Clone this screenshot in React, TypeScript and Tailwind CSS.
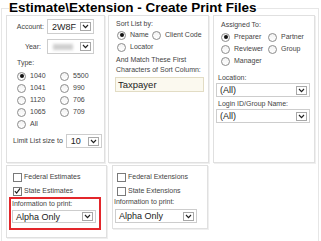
import React from "react";

function Radio({ checked }: { checked?: boolean }) {
  return (
    <span className="w-[9px] h-[9px] rounded-full border border-[#8c8c8c] bg-gradient-to-b from-[#f2f2f2] to-white flex items-center justify-center shrink-0">
      {checked && <span className="w-[4px] h-[4px] rounded-full bg-[#111]" />}
    </span>
  );
}

function Check({ checked }: { checked?: boolean }) {
  return (
    <span className="w-[9px] h-[9px] border border-[#7a7a7a] bg-white flex items-center justify-center shrink-0">
      {checked && (
        <svg width="8" height="8" viewBox="0 0 8 8">
          <path d="M1 4.2 L3 6.4 L7 1" fill="none" stroke="#222" strokeWidth="1.4" />
        </svg>
      )}
    </span>
  );
}

function Arrow() {
  return (
    <span className="ml-auto mr-[2px] w-[11px] h-[9px] border border-[#a8a8a8] bg-white flex items-center justify-center shrink-0">
      <svg width="7" height="5" viewBox="0 0 7 5">
        <path d="M1 1 L3.5 3.6 L6 1" fill="none" stroke="#222" strokeWidth="1.2" />
      </svg>
    </span>
  );
}

function RadioItem({ label, checked, className }: { label: string; checked?: boolean; className?: string }) {
  return (
    <div className={"flex items-center gap-[4px] " + (className ?? "")}>
      <Radio checked={checked} />
      <span>{label}</span>
    </div>
  );
}

const panel = "border border-[#e0e0e0] shadow-[1px_1px_0_#efefef] bg-white";

export default function App() {
  return (
    <div className="w-[321px] h-[241px] overflow-hidden bg-white font-['Liberation_Sans',Arial,sans-serif] text-[#444] text-[7px] leading-[10px]">
      <fieldset className="ml-[1px] w-[318px] min-h-[260px] border border-[#e6e6e6] pl-[4px]">
        <legend className="ml-[3px] text-[13.5px] leading-[16px] font-bold text-black">
          Estimate\Extension - Create Print Files
        </legend>

        <div className="flex -mt-px">
          {/* type / account */}
          <div className={panel + " w-[99px] h-[148px] pt-[3px]"}>
            <div className="flex items-center">
              <span className="w-[37px] text-right">Account:</span>
              <div className="ml-[3px] w-[47px] h-[15px] border border-[#cdcdcd] flex items-center pl-[4px] text-[9px] text-[#222]">
                2W8F
                <Arrow />
              </div>
            </div>
            <div className="flex items-center mt-[5px]">
              <span className="w-[34px] text-right">Year:</span>
              <div className="ml-[6px] w-[47px] h-[15px] border border-[#cdcdcd] flex items-center pl-[5px]">
                <span className="w-[20px] h-[6px] bg-[#cfcfcf] blur-[1.5px]" />
                <Arrow />
              </div>
            </div>
            <div className="pl-[10px] mt-[4px]">Type:</div>
            <div className="pl-[10px] mt-[2px] grid grid-cols-[43px_40px]">
              <RadioItem className="h-[12px]" label="1040" checked />
              <RadioItem className="h-[12px]" label="5500" />
              <RadioItem className="h-[12px]" label="1041" />
              <RadioItem className="h-[12px]" label="990" />
              <RadioItem className="h-[12px]" label="1120" />
              <RadioItem className="h-[12px]" label="706" />
              <RadioItem className="h-[12px]" label="1065" />
              <RadioItem className="h-[12px]" label="709" />
              <RadioItem className="h-[12px]" label="All" />
            </div>
            <div className="flex items-center mt-[4px] pl-[6px]">
              <span>Limit List size to</span>
              <div className="ml-[3px] w-[36px] h-[14px] border border-[#cdcdcd] flex items-center pl-[4px] text-[9px] text-[#222]">
                10
                <Arrow />
              </div>
            </div>
          </div>

          {/* sort */}
          <div className={panel + " ml-[3px] w-[101px] h-[148px] pt-[3px] pl-[7px]"}>
            <div>Sort List by:</div>
            <div className="flex h-[12px] ml-[1px]">
              <RadioItem className="w-[35px]" label="Name" checked />
              <RadioItem label="Client Code" />
            </div>
            <RadioItem className="h-[12px] ml-[1px]" label="Locator" />
            <div className="mt-[2px]">
              And Match These First
              <br />
              Characters of Sort Column:
            </div>
            <div className="mt-[2px] -ml-px w-[89px] h-[15px] border border-[#e2dcc4] bg-[#fbf9ef] flex items-center pl-[2px] text-[9.5px] text-[#222]">
              Taxpayer
            </div>
          </div>

          {/* assigned */}
          <div className={panel + " ml-[4px] w-[102px] h-[148px] pt-[4px] pl-[2px]"}>
            <div className="pl-[5px]">Assigned To:</div>
            <div className="pl-[5px] mt-[1px] grid grid-cols-[47px_45px]">
              <RadioItem className="h-[12px]" label="Preparer" checked />
              <RadioItem className="h-[12px]" label="Partner" />
              <RadioItem className="h-[12px]" label="Reviewer" />
              <RadioItem className="h-[12px]" label="Group" />
              <RadioItem className="h-[12px]" label="Manager" />
            </div>
            <div className="pl-[2px] mt-[6px]">Location:</div>
            <div className="w-[94px] h-[14px] border border-[#cdcdcd] flex items-center pl-[3px] text-[9px] text-[#222]">
              (All)
              <Arrow />
            </div>
            <div className="pl-[2px] mt-[2px]">Login ID/Group Name:</div>
            <div className="w-[94px] h-[14px] border border-[#cdcdcd] flex items-center pl-[3px] text-[9px] text-[#222]">
              (All)
              <Arrow />
            </div>
          </div>
        </div>

        <div className="flex items-start mt-[2px]">
          {/* estimates */}
          <div className={panel + " w-[101px] h-[73px] pt-[5px]"}>
            <div className="flex items-center gap-[2px] h-[12px] pl-[6px]">
              <Check />
              <span>Federal Estimates</span>
            </div>
            <div className="flex items-center gap-[2px] h-[12px] pl-[6px] mt-[2px]">
              <Check checked />
              <span>State Estimates</span>
            </div>
            <div className="ml-[2px] w-[92px] h-[33px] border-2 border-[#e3262b] pl-[1px]">
              <div className="leading-[9px]">Information to print:</div>
              <div className="mt-[2px] w-[84px] h-[13px] border border-[#cdcdcd] flex items-center pl-[3px] text-[9px] text-[#222]">
                Alpha Only
                <Arrow />
              </div>
            </div>
          </div>

          {/* extensions */}
          <div className={panel + " ml-[5px] w-[96px] h-[64px] pt-[5px]"}>
            <div className="flex items-center gap-[2px] h-[12px] pl-[4px]">
              <Check />
              <span>Federal Extensions</span>
            </div>
            <div className="flex items-center gap-[2px] h-[12px] pl-[4px] mt-[2px]">
              <Check />
              <span>State Extensions</span>
            </div>
            <div className="pl-[1px]">Information to print:</div>
            <div className="mt-[2px] ml-[2px] w-[82px] h-[14px] border border-[#cdcdcd] flex items-center pl-[3px] text-[9px] text-[#222]">
              Alpha Only
              <Arrow />
            </div>
          </div>
        </div>
      </fieldset>
    </div>
  );
}
